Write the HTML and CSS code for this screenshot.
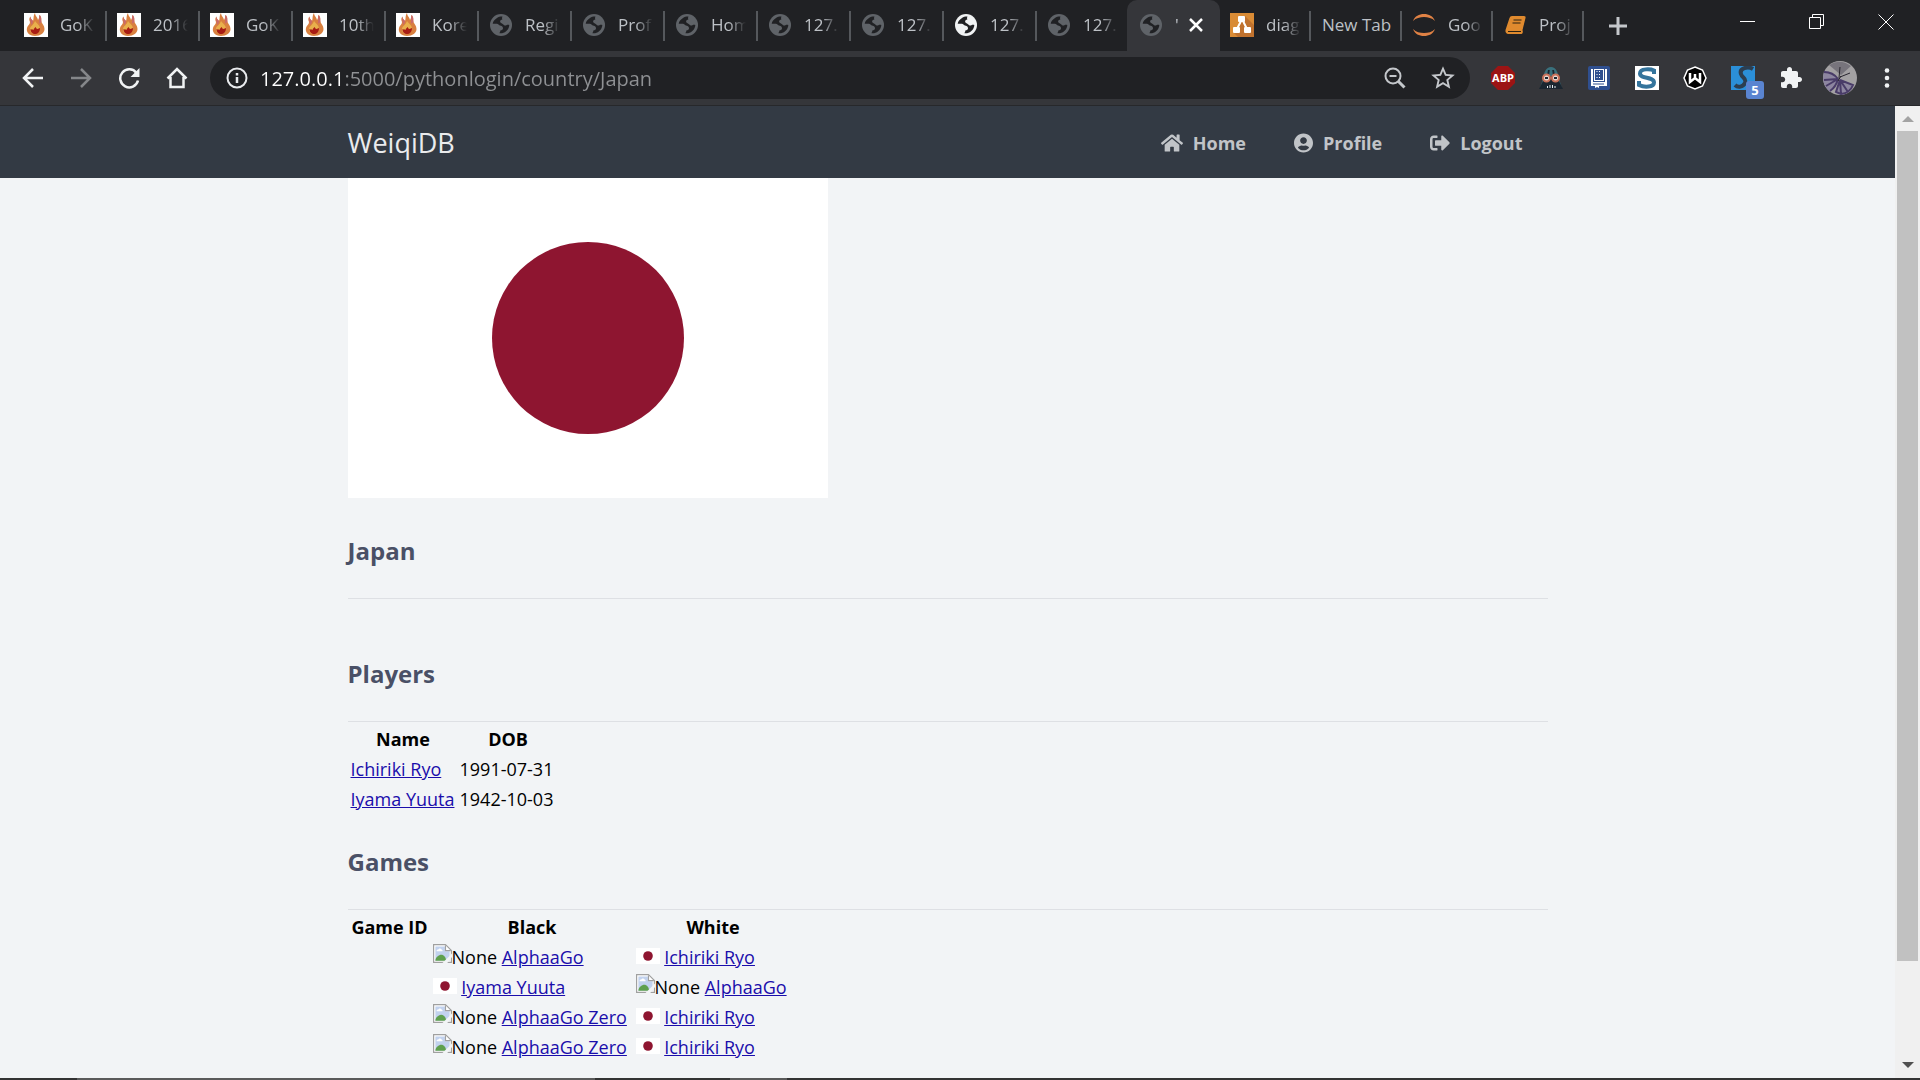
FILE: index.html
```html
<!DOCTYPE html>
<html lang="en">
<head>
<meta charset="utf-8">
<title>WeiqiDB - Japan</title>
<link rel="stylesheet" href="styles.css">
</head>
<body>
<svg class="sprite" aria-hidden="true">
  <symbol id="flame" viewBox="0 0 24 24">
    <path fill="#fff" d="M0 0h24v24H0z"/>
    <path fill="#d9803f" d="M11 23C5 23 2 19 3 15c.6-2.500 3-3.500 3-6C5 7 5 5 6.500 3.500 6.500 6 8 6.500 9 8 10 6 9 3 11 0c0 3 2.500 4 3 7 1-1 1-3 1.500-5C18 4 17 7 17.500 9c.8 2 3 3.500 3 7 0 4-4 7-9.500 7z"/>
    <path fill="#c96a6a" d="M6.500 3.500C6.500 6 8 6.500 9 8c0 2-1 3-2 4 .5-3-2-4-.5-8.500zM15.500 2C18 4 17 7 17.500 9c-1 1-2 2-2.500 1 .6-3-.5-4 .5-8z"/>
    <path fill="#e9b04c" d="M11 8c2 3 5 4 5 8 0 3-2 5-5 5s-5-2-5-5 4-4 5-8z"/>
    <path fill="#a81c14" d="M6.500 16c1.500 1 2 0 3 1 .5-2 1.500-2 2-3 .8 1 1 2 2 2l2.500-1c0 4-2 6-5 6-2.500 0-4.500-2-4.500-5z"/>
  </symbol>
  <symbol id="globe" viewBox="0 0 24 24">
    <circle cx="12" cy="12" r="11" fill="currentColor"/>
    <g class="globe-sea">
      <path d="M8 5c1.500-1 3.500-1.500 5.500-1.400-.5 1.200-.6 2-.1 2.900-1.400.2-2.400.9-2.300 2 .1 1.500 1.800 1.600 2.600 2.500 1.100 1.300 2.400 1.900 3.700 1.200 1-.6 1.800-.6 2.900-.2-.1 4-3.200 7.400-7.200 8.200-1 .2-2.100.1-3.100-.2 1.200-.3 1.200-1.500 1.300-2.600 1.500-.1 2.700-.8 2.700-2.200 0-1.900-1.600-2.400-3.200-2.700-1.100-.3-1.500-1.500-2.900-1.700H3.700C4 8.500 5.700 6.300 8 5z"/>
    </g>
  </symbol>
  <symbol id="diagram" viewBox="0 0 24 24">
    <path fill="#d98b35" d="M0 0h24v24H0z"/>
    <path fill="#c0722e" d="M15 3l9 9v12H8l-5-5 8-9z"/>
    <path stroke="#fff" stroke-width="2" fill="none" d="M12 6L7 16M12 6l5 10"/>
    <g fill="#fff"><rect x="8" y="3" width="7" height="6" rx="1"/><rect x="3" y="14" width="7" height="6" rx="1"/><rect x="14" y="14" width="7" height="6" rx="1"/></g>
  </symbol>
  <symbol id="jupyter" viewBox="0 0 24 24">
    <path fill="#e08245" d="M1 8C3 3 7 1 12 1s9 2 11 7c-3-3-7-4-11-4S4 5 1 8zM1 16c2 5 6 7 11 7s9-2 11-7c-3 3-7 4-11 4s-8-1-11-4z"/>
  </symbol>
  <symbol id="book" viewBox="0 0 24 24">
    <path fill="#e08a2e" d="M9 3h12q2 0 1.500 2l-3 12q1 3-1 4H5q-3-1-2.500-4L6.500 5Q7 3 9 3z"/>
    <path stroke="#2b2111" stroke-width="1.200" fill="none" d="M10.500 7h8M9.500 10h8M5 18.500h13"/>
  </symbol>
  <symbol id="broken" viewBox="0 0 16 16">
    <path fill="#fff" stroke="#a0a0a0" d="M.5.5h10l5 5v10H.5z"/>
    <path fill="#c2d2ee" d="M2 2h8l4 4v8H2z"/>
    <path fill="#fff" d="M3 6c0-2 2-1 2-2 2-1 2 1 3 1v1zM10 1v5h5z"/>
    <path fill="none" stroke="#a0a0a0" d="M10.500 1v4.500H15"/>
    <path fill="#5fa04e" d="M2 14c0-3 3-5 5-5s4 2 4 5z"/>
    <path fill="#f2f4f6" d="M16 8v3l-4 5H8z"/>
  </symbol>
  <symbol id="japan" viewBox="0 0 480 320">
    <path fill="#fff" d="M0 0h480v320H0z"/><circle cx="240" cy="160" r="96" fill="#8e1530"/>
  </symbol>
</svg>

<div class="browser">
  <header class="chrome">
    <div class="tabs">
      <button class="tab"><svg class="favicon"><use href="#flame"/></svg><span class="tab-title">GoK</span></button>
      <button class="tab"><svg class="favicon"><use href="#flame"/></svg><span class="tab-title">2016</span></button>
      <button class="tab"><svg class="favicon"><use href="#flame"/></svg><span class="tab-title">GoK</span></button>
      <button class="tab"><svg class="favicon"><use href="#flame"/></svg><span class="tab-title">10th</span></button>
      <button class="tab"><svg class="favicon"><use href="#flame"/></svg><span class="tab-title">Kore</span></button>
      <button class="tab"><svg class="favicon globe"><use href="#globe"/></svg><span class="tab-title">Regi</span></button>
      <button class="tab"><svg class="favicon globe"><use href="#globe"/></svg><span class="tab-title">Prof</span></button>
      <button class="tab"><svg class="favicon globe"><use href="#globe"/></svg><span class="tab-title">Hom</span></button>
      <button class="tab"><svg class="favicon globe"><use href="#globe"/></svg><span class="tab-title">127.</span></button>
      <button class="tab"><svg class="favicon globe"><use href="#globe"/></svg><span class="tab-title">127.</span></button>
      <button class="tab"><svg class="favicon globe globe-bright"><use href="#globe"/></svg><span class="tab-title">127.</span></button>
      <button class="tab tab-last"><svg class="favicon globe"><use href="#globe"/></svg><span class="tab-title">127.</span></button>
      <div class="tab tab-active"><svg class="favicon globe"><use href="#globe"/></svg><span class="tab-title">'</span><button class="tab-close" aria-label="Close tab"><svg width="14" height="14" viewBox="0 0 14 14"><path stroke="#fff" stroke-width="2.500" d="M1 1l12 12M13 1L1 13"/></svg></button></div>
      <button class="tab tab-narrow"><svg class="favicon"><use href="#diagram"/></svg><span class="tab-title">diag</span></button>
      <button class="tab tab-narrow"><span class="tab-name">New Tab</span></button>
      <button class="tab tab-narrow"><svg class="favicon"><use href="#jupyter"/></svg><span class="tab-title">Goo</span></button>
      <button class="tab tab-narrow"><svg class="favicon"><use href="#book"/></svg><span class="tab-title">Proj</span></button>
      <button class="new-tab" aria-label="New tab"><svg width="18" height="18" viewBox="0 0 18 18"><path stroke="#c4c7cb" stroke-width="3" d="M9 0v18M0 9h18"/></svg></button>
      <div class="window-buttons">
        <button aria-label="Minimize"><svg width="16" height="16" viewBox="0 0 16 16"><path stroke="#fff" d="M0 7.500h15"/></svg></button>
        <button aria-label="Restore"><svg width="16" height="16" viewBox="0 0 16 16"><path fill="none" stroke="#fff" d="M.5 3.500h11v11H.5zM3.500 3V.5h11v11H12"/></svg></button>
        <button aria-label="Close"><svg width="16" height="16" viewBox="0 0 16 16"><path stroke="#fff" d="M.5.5l15 15M15.500.5l-15 15"/></svg></button>
      </div>
    </div>
    <div class="toolbar">
      <div class="nav-buttons">
        <button aria-label="Back"><svg width="22" height="22" viewBox="0 0 22 22"><path fill="none" stroke="#f1f3f4" stroke-width="2.500" d="M21 11H2.500M11 2l-9 9 9 9"/></svg></button>
        <button aria-label="Forward"><svg width="22" height="22" viewBox="0 0 22 22"><path fill="none" stroke="#85878a" stroke-width="2.500" d="M1 11h18.500M11 2l9 9-9 9"/></svg></button>
        <button aria-label="Reload"><svg width="22" height="22" viewBox="0 0 22 22"><path fill="none" stroke="#f1f3f4" stroke-width="2.500" d="M18.500 6A9 9 0 1 0 20 13.500"/><path fill="#f1f3f4" d="M21.500 1v9h-9z"/></svg></button>
        <button aria-label="Home page"><svg width="22" height="22" viewBox="0 0 22 22"><path fill="none" stroke="#f1f3f4" stroke-width="2.500" d="M1.500 11.500L11 2l9.500 9.500M4.500 10v10h13V10"/></svg></button>
      </div>
      <div class="omnibox">
        <svg class="info" width="22" height="22" viewBox="0 0 22 22"><circle cx="11" cy="11" r="9.500" fill="none" stroke="#e8eaed" stroke-width="2"/><path stroke="#e8eaed" stroke-width="2.500" d="M11 10v6M11 6v2.500"/></svg>
        <input class="url" type="text" aria-label="Address" value="127.0.0.1:5000/pythonlogin/country/Japan">
        <button aria-label="Zoom"><svg width="22" height="22" viewBox="0 0 22 22"><g fill="none" stroke="#c4c7cb" stroke-width="2"><circle cx="9" cy="9" r="7.500"/><path d="M5.500 9h7"/><path stroke-width="3" d="M14 14l6.500 6.500"/></g></svg></button>
        <button aria-label="Bookmark"><svg width="26" height="26" viewBox="1 1 22 22"><path fill="#c4c7cb" d="M22 9.240l-7.190-.62L12 2 9.190 8.630 2 9.240l5.460 4.730L5.820 21 12 17.270 18.180 21l-1.630-7.030L22 9.240zM12 15.400l-3.760 2.270 1-4.280-3.320-2.880 4.380-.38L12 6.100l1.710 4.040 4.380.38-3.320 2.880 1 4.280L12 15.400z"/></svg></button>
      </div>
      <div class="extensions">
        <button aria-label="Adblock Plus"><svg width="24" height="24" viewBox="0 0 24 24"><path fill="#9c1414" d="M7 0h10l7 7v10l-7 7H7l-7-7V7z"/><text class="ext-abp" x="12" y="16" text-anchor="middle">ABP</text></svg></button>
        <button aria-label="Reader"><svg width="24" height="24" viewBox="0 0 24 24"><path fill="#39707c" d="M12 1c5 0 7 5 8 12l3 9H1l3-9C5 6 7 1 12 1z"/><path fill="#1b2630" d="M9 4h6l1 6 4 5 4 8H0l4-8 4-5z"/><path fill="#39707c" d="M11 2h2l1 8h-4z"/><g fill="#e8d9d2" stroke="#c9725a" stroke-width="2"><circle cx="7.500" cy="12" r="3.500"/><circle cx="16.500" cy="12" r="3.500"/></g><path fill="#1b2630" d="M6 11h3v2H6zM15 11h3v2h-3z"/><path stroke="#e9eef2" d="M8.500 20v2M11 19v3M13.500 19v3M16 20v2"/></svg></button>
        <button aria-label="Notebook"><svg width="24" height="24" viewBox="0 0 24 24"><rect x="1" width="22" height="24" rx="2" fill="#2f4f8f"/><path fill="#fff" d="M4 3h2v13h12V3h2v17h-8v2l-2-1-2 1v-2H4z"/><path fill="#fff" d="M7 3h10v12H7z"/><path fill="#2f4f8f" d="M8 4h8v10H8zM6 17.500h11v1H6z"/><path stroke="#fff" stroke-dasharray="1 2" d="M10 5v8M12.500 5v8"/></svg></button>
        <button aria-label="Scribe"><svg width="24" height="24" viewBox="0 0 24 24"><path fill="#fff" d="M0 0h24v24H0z"/><path fill="none" stroke="#34749c" stroke-width="4" d="M19 8V4.500C16 3 5 2 5 7.500c0 5.500 14 3 14 9 0 5-10 5-15 2.500V15"/></svg></button>
        <button aria-label="Wiki"><svg width="24" height="24" viewBox="0 0 24 24"><path fill="#000" stroke="#fff" stroke-width="1.500" d="M12 1l7.500 3L23 12l-3.500 8L12 23l-7.500-3L1 12l3.500-8z"/><path fill="none" stroke="#fff" stroke-width="2.500" d="M7 7v9l5-4 5 4V7M12 8v4"/></svg></button>
        <button class="ext-badged" aria-label="Scan, 5 items"><svg width="24" height="24" viewBox="0 0 24 24"><path fill="#2b8fd8" d="M0 0h24v24H0z"/><path fill="none" stroke="#2c3e50" stroke-width="4" d="M22 3c-5-3-14-1-12 5 1 4 6 4 4 9-2 4-7 5-10 2"/></svg><span class="badge">5</span></button>
        <button aria-label="Extensions"><svg width="24" height="24" viewBox="0 0 24 24"><path fill="#f1f3f4" d="M20.500 11H19V7c0-1.100-.9-2-2-2h-4V3.500C13 2.120 11.880 1 10.500 1S8 2.120 8 3.500V5H4c-1.100 0-1.990.9-1.990 2v3.800H3.500c1.490 0 2.700 1.210 2.700 2.700s-1.210 2.700-2.700 2.700H2V20c0 1.100.9 2 2 2h3.800v-1.500c0-1.490 1.210-2.700 2.700-2.700 1.490 0 2.700 1.210 2.700 2.700V22H17c1.100 0 2-.9 2-2v-4h1.500c1.380 0 2.500-1.120 2.500-2.500S21.880 11 20.500 11z"/></svg></button>
        <button class="account" aria-label="Account"><svg width="34" height="34" viewBox="0 0 34 34"><circle cx="17" cy="17" r="17" fill="#a3a1a3"/><path fill="#77747c" d="M6 4Q17-3 28 5L18 14z"/><path fill="#8d86a0" d="M1 10q9 0 14 8-2 8-8 13Q0 25 0 17zM17 18l13 6q-4 9-12 10l-5-2z"/><path fill="none" stroke="#493c68" stroke-width="2" d="M1 11q9 0 14 7-2 8-8 12M15 18L1 19M15 18L3 25M17 19l13 5q-3 8-12 9l-5-2 4-12 1 14M17 19l8 12"/><path stroke="#2a2730" fill="none" d="M16 17L17 6M17 16l10-4M15 20l3-5"/></svg></button>
        <button class="menu" aria-label="Menu"><svg width="6" height="20" viewBox="0 0 6 20"><g fill="#f1f3f4"><circle cx="3" cy="2.500" r="2.300"/><circle cx="3" cy="10" r="2.300"/><circle cx="3" cy="17.500" r="2.300"/></g></svg></button>
      </div>
    </div>
  </header>

  <div class="viewport">
    <div class="page">
      <nav class="navtop">
        <div class="container nav-row">
          <h1 class="brand">WeiqiDB</h1>
          <a href="#home"><svg width="22" height="20" viewBox="0 0 576 512"><path fill="currentColor" d="M280.370 148.260L96 300.110V464a16 16 0 0 0 16 16l112.060-.29a16 16 0 0 0 15.920-16V368a16 16 0 0 1 16-16h64a16 16 0 0 1 16 16v95.640a16 16 0 0 0 16 16.050L464 480a16 16 0 0 0 16-16V300L295.670 148.260a12.190 12.190 0 0 0-15.300 0zM571.600 251.470L488 182.560V44.050a12 12 0 0 0-12-12h-56a12 12 0 0 0-12 12v72.610L318.470 43a48 48 0 0 0-61 0L4.340 251.470a12 12 0 0 0-1.600 16.900l25.500 31A12 12 0 0 0 45.150 301l235.220-193.740a12.190 12.190 0 0 1 15.300 0L530.900 301a12 12 0 0 0 16.900-1.600l25.500-31a12 12 0 0 0-1.700-16.930z"/></svg>Home</a>
          <a href="#profile"><svg width="19" height="20" viewBox="0 0 496 512"><path fill="currentColor" d="M248 8C111 8 0 119 0 256s111 248 248 248 248-111 248-248S385 8 248 8zm0 96c48.600 0 88 39.400 88 88s-39.400 88-88 88-88-39.400-88-88 39.400-88 88-88zm0 344c-58.700 0-111.300-26.600-146.500-68.200 18.800-35.400 55.600-59.800 98.500-59.800 2.400 0 4.800.4 7.100 1.100 13 4.200 26.600 6.900 40.900 6.900 14.300 0 28-2.700 40.900-6.900 2.300-.7 4.700-1.100 7.100-1.100 42.900 0 79.700 24.400 98.500 59.800C359.300 421.400 306.700 448 248 448z"/></svg>Profile</a>
          <a href="#logout"><svg width="20" height="20" viewBox="0 0 512 512"><path fill="currentColor" d="M497 273L329 441c-15 15-41 4.500-41-17v-96H152c-13.300 0-24-10.700-24-24v-96c0-13.300 10.700-24 24-24h136V88c0-21.400 25.900-32 41-17l168 168c9.300 9.400 9.300 24.600 0 34zM192 436v-40c0-6.600-5.400-12-12-12H96c-17.700 0-32-14.300-32-32V160c0-17.700 14.300-32 32-32h84c6.600 0 12-5.400 12-12V76c0-6.600-5.400-12-12-12H96c-53 0-96 43-96 96v192c0 53 43 96 96 96h84c6.600 0 12-5.400 12-12z"/></svg>Logout</a>
        </div>
      </nav>
      <main class="container">
        <svg class="flag" viewBox="0 0 480 320" role="img" aria-label="Flag of Japan"><use href="#japan"/></svg>
        <h2 class="country">Japan</h2>
        <h2>Players</h2>
        <table class="players">
          <colgroup><col class="col-name"><col class="col-dob"></colgroup>
          <tr><th>Name</th><th>DOB</th></tr>
          <tr><td><a href="#ichiriki">Ichiriki Ryo</a></td><td>1991-07-31</td></tr>
          <tr><td><a href="#iyama">Iyama Yuuta</a></td><td>1942-10-03</td></tr>
        </table>
        <h2 class="after-table">Games</h2>
        <table class="games">
          <colgroup><col class="col-id"><col class="col-black"><col class="col-white"></colgroup>
          <tr><th>Game ID</th><th>Black</th><th>White</th></tr>
          <tr><td></td><td><svg class="broken"><use href="#broken"/></svg>None <a href="#alphago">AlphaaGo</a></td><td><svg class="mini-flag"><use href="#japan"/></svg> <a href="#ichiriki">Ichiriki Ryo</a></td></tr>
          <tr><td></td><td><svg class="mini-flag"><use href="#japan"/></svg> <a href="#iyama">Iyama Yuuta</a></td><td><svg class="broken"><use href="#broken"/></svg>None <a href="#alphago">AlphaaGo</a></td></tr>
          <tr><td></td><td><svg class="broken"><use href="#broken"/></svg>None <a href="#zero">AlphaaGo Zero</a></td><td><svg class="mini-flag"><use href="#japan"/></svg> <a href="#ichiriki">Ichiriki Ryo</a></td></tr>
          <tr><td></td><td><svg class="broken"><use href="#broken"/></svg>None <a href="#zero">AlphaaGo Zero</a></td><td><svg class="mini-flag"><use href="#japan"/></svg> <a href="#ichiriki">Ichiriki Ryo</a></td></tr>
        </table>
      </main>
    </div>
    <div class="scrollbar">
      <svg class="arrow" width="12" height="6" viewBox="0 0 12 6"><path fill="#a3a3a3" d="M6 0l6 6H0z"/></svg>
      <div class="track"><div class="thumb"></div></div>
      <svg class="arrow" width="12" height="6" viewBox="0 0 12 6"><path fill="#505050" d="M0 0h12L6 6z"/></svg>
    </div>
  </div>
  <footer class="taskbar-edge"></footer>
</div>
</body>
</html>
```
FILE: styles.css
```css
* { box-sizing: border-box; }

body {
  margin: 0;
  background: #f2f4f6;
  color: #000;
  font-family: "Open Sans", "Noto Sans", sans-serif;
  font-size: 18px;
}

button {
  margin: 0;
  padding: 0;
  border: 0;
  background: none;
  color: inherit;
  font: inherit;
}

svg { display: block; flex: none; }

.sprite { position: absolute; width: 0; height: 0; }

.browser {
  display: flex;
  flex-direction: column;
  height: 100vh;
  overflow: hidden;
}

/* Tab strip */
.chrome { flex: none; }

.tabs {
  display: flex;
  height: 51px;
  padding-left: 14px;
  background: #202124;
}

.tab {
  position: relative;
  display: flex;
  flex: none;
  align-items: center;
  width: 93px;
  height: 51px;
  padding: 0 12px 2px 10px;
  color: #bdc1c6;
  font-size: 17px;
  text-align: left;
}

.tab::after {
  content: "";
  position: absolute;
  top: 11px;
  right: 0;
  width: 2px;
  height: 30px;
  background: #55585c;
}

.tab-last { width: 90px; padding-right: 9px; }
.tab-narrow { width: 91px; padding-right: 10px; }
.tab-last::after, .tab-active::after { display: none; }
.tab-name { padding-left: 1px; white-space: nowrap; }

.tab-active {
  padding-right: 17px;
  padding-left: 12px;
  border-radius: 10px 10px 0 0;
  background: #35363a;
}

.tab-active .globe-sea { fill: #35363a; }

.favicon { width: 24px; height: 24px; }
.globe { color: #5f6368; }
.globe-bright { color: #f1f3f4; }
.globe-sea { fill: #202124; }

.tab-title {
  flex: 1;
  margin-left: 12px;
  overflow: hidden;
  white-space: nowrap;
  -webkit-mask-image: linear-gradient(90deg, #000 50%, transparent);
  mask-image: linear-gradient(90deg, #000 50%, transparent);
}

.new-tab { margin-left: 25px; }

.window-buttons {
  display: flex;
  gap: 53px;
  margin-left: auto;
  padding: 0 26px 7px 0;
}

/* Toolbar */
.toolbar {
  display: flex;
  align-items: center;
  height: 55px;
  border-bottom: 1px solid #27282b;
  background: #35363a;
}

.nav-buttons { display: flex; gap: 26px; padding: 0 22px; }

.omnibox {
  display: flex;
  flex: 1;
  align-items: center;
  gap: 24px;
  height: 42px;
  padding: 0 14px 0 16px;
  border-radius: 21px;
  background: #202124;
}

.info { margin-right: -12px; }

.url {
  flex: 1;
  min-width: 0;
  padding: 0;
  border: 0;
  outline: 0;
  background: linear-gradient(90deg, #fff 84px, #8f9194 84px);
  -webkit-background-clip: text;
  background-clip: text;
  -webkit-text-fill-color: transparent;
  font: inherit;
  font-size: 20px;
}

.extensions {
  display: flex;
  align-items: center;
  gap: 24px;
  padding: 0 30px 0 21px;
}

.account { margin-left: -4px; }
.ext-abp { fill: #fff; font-size: 11px; font-weight: 700; }
.ext-badged { position: relative; }

.badge {
  position: absolute;
  top: 15px;
  left: 15px;
  width: 18px;
  height: 18px;
  border-radius: 3px;
  background: #5a84d0;
  color: #fff;
  font-size: 13px;
  font-weight: 700;
  line-height: 18px;
}

.menu { margin-left: 3px; }

/* Page */
.viewport { display: flex; flex: 1; min-height: 0; }
.page { flex: 1; min-width: 0; overflow: hidden; }

.container {
  width: 100%;
  max-width: 1200px;
  margin: 0 auto;
}

.navtop { background: #333a44; color: #c1c4c8; }

.nav-row {
  display: flex;
  align-items: center;
  gap: 48px;
  height: 72px;
  padding-right: 25px;
}

.brand {
  flex: 1;
  margin: 0;
  color: #eaebed;
  font-size: 27px;
  font-weight: 400;
}

.nav-row a {
  display: flex;
  align-items: center;
  gap: 10px;
  padding-top: 2px;
  color: inherit;
  font-weight: 700;
  text-decoration: none;
}

.flag { width: 480px; max-width: 100%; height: auto; }

h2 {
  margin: 0;
  padding: 35px 0 29px;
  border-bottom: 1px solid #dee0e4;
  color: #4a5066;
  font-size: 24px;
  line-height: 36px;
}

.country { margin-bottom: 22px; }
.after-table { padding-top: 29px; }

table {
  margin-top: 1px;
  border-collapse: separate;
  border-spacing: 2px;
  table-layout: fixed;
}

.players { width: 212px; }
.games { width: 446px; }
.col-name { width: 107px; }
.col-id { width: 80px; }
.col-black { width: 201px; }

th, td {
  height: 28px;
  padding: 1px;
  line-height: 26px;
  white-space: nowrap;
  vertical-align: top;
}

td a { color: #1a0dab; }
td svg { display: inline-block; }
.broken { width: 19px; height: 19px; vertical-align: 1px; }
.mini-flag { width: 24px; height: 16px; vertical-align: baseline; }

/* Scrollbar */
.scrollbar {
  display: flex;
  flex: none;
  flex-direction: column;
  align-items: center;
  width: 25px;
  padding: 10px 0;
  background: #f0f0f0;
}

.track { flex: 1; width: 21px; padding: 9px 0; }
.thumb { height: 90%; background: #c1c1c1; }

.taskbar-edge {
  flex: none;
  height: 2px;
  background: linear-gradient(90deg, #333 4%, #5a5a5a 4% 31%, #333 31% 38%, #5a5a5a 38% 41%, #333 41%);
}
```
